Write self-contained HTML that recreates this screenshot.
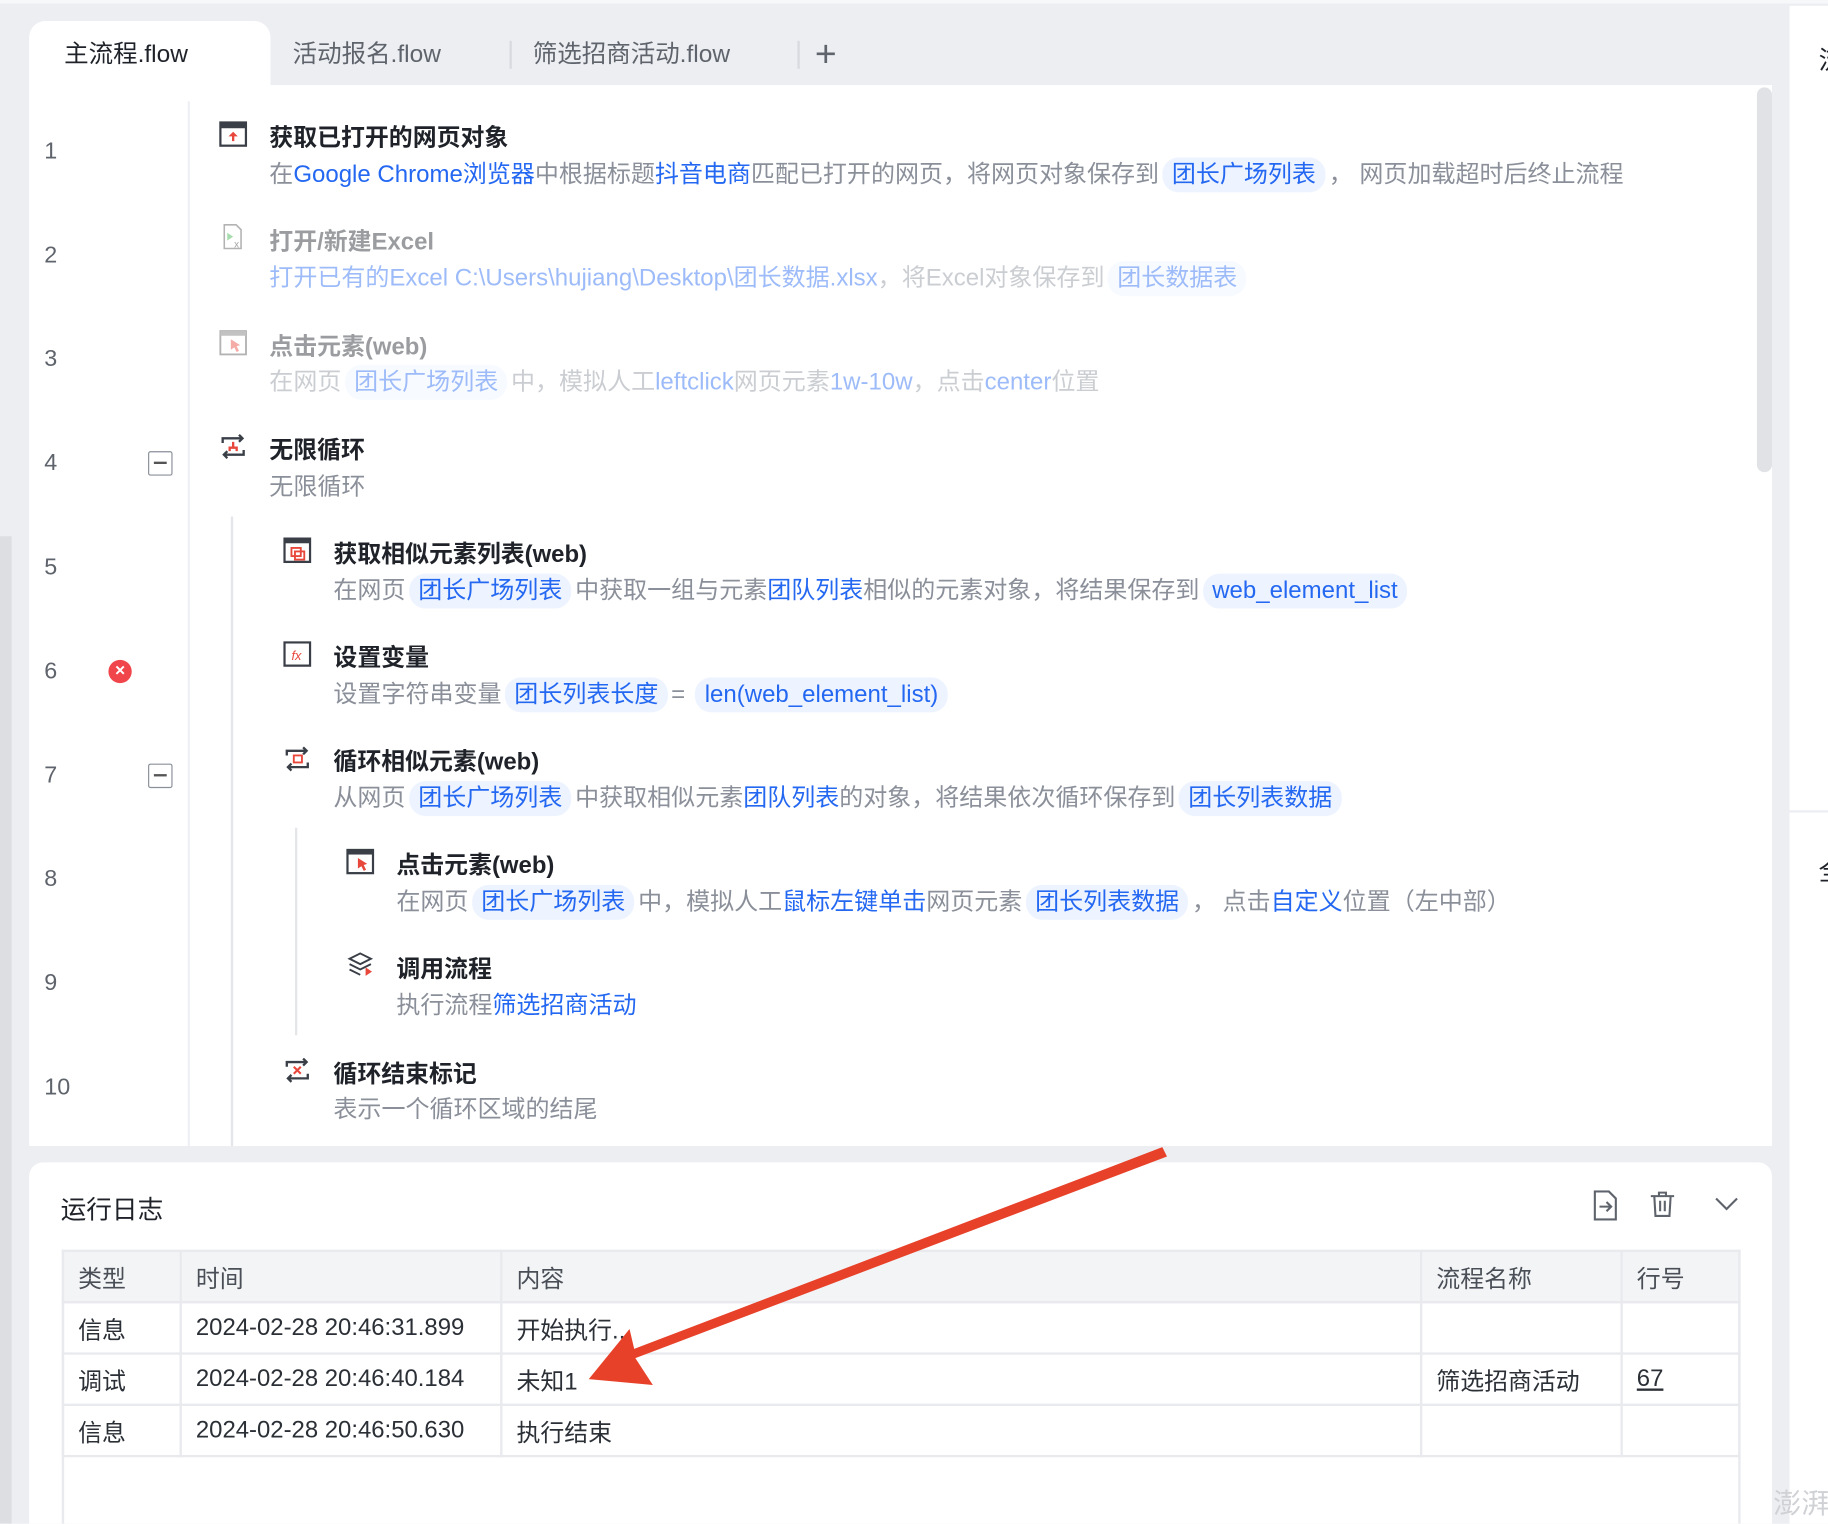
<!DOCTYPE html>
<html><head><meta charset="utf-8">
<style>
*{box-sizing:border-box;margin:0;padding:0}
html,body{width:1828px;height:1524px;overflow:hidden;background:#eceef2}
#w{position:absolute;left:0;top:0;width:1568px;height:1307px;overflow:hidden;transform:scale(1.16582);transform-origin:0 0;background:#eceef2;font-family:"Liberation Sans","Noto Sans CJK SC",sans-serif;color:#1f2329}
.a{position:absolute}
.tab{position:absolute;top:30px;font-size:21px;color:#5f646c;white-space:nowrap}
.ln{position:absolute;left:38px;font-size:20px;color:#5f646c}
.t{position:absolute;font-size:20.5px;font-weight:bold;white-space:nowrap;color:#1f2329}
.d{position:absolute;font-size:20.6px;color:#8a8f99;white-space:nowrap}
.b{color:#2468f2}
.g{display:inline-block;background:#eef4ff;color:#2468f2;border-radius:14px;padding:0 8px;margin:0 3px;line-height:30px}
.fade{opacity:.45}
.ic{position:absolute;width:24px;height:22px}
.box{position:absolute;width:21px;height:21px;border:1.5px solid #8a8f99;border-radius:2px}
.box:after{content:"";position:absolute;left:4px;right:4px;top:8px;height:1.5px;background:#555}
table{border-collapse:collapse;font-size:20.5px;color:#2b2f36}
td,th{border:2px solid #e9eaee;text-align:left;font-weight:normal;padding:0 12px;height:44px;white-space:nowrap}
th{background:#f3f4f6;color:#4a4f57}
</style></head><body><div id="w">
<div class="a" style="left:0;top:0;width:1568px;height:3px;background:#f7f8fa"></div>
<div class="a" style="left:0;top:460px;width:10px;height:847px;background:#dcdee2"></div>
<!-- right panel -->
<div class="a" style="left:1535px;top:5px;width:33px;height:1302px;background:#fff"></div>
<div class="a" style="left:1535px;top:695px;width:33px;height:2px;background:#eceef2"></div>
<div class="a" style="left:1560px;top:34px;font-size:22px">流</div>
<div class="a" style="left:1560px;top:730px;font-size:22px">全</div>
<div class="a" style="left:1521px;top:1277px;font-size:24px;line-height:28px;color:#cfd1d5;white-space:nowrap">澎湃</div>
<!-- tabs -->
<div class="a" style="left:25px;top:18px;width:207px;height:60px;background:#fff;border-radius:14px 14px 0 0"></div>
<div class="tab" style="left:55px;color:#1f2329">主流程.flow</div>
<div class="tab" style="left:251px">活动报名.flow</div>
<div class="a" style="left:437px;top:35px;width:2px;height:24px;background:#d8dadf"></div>
<div class="tab" style="left:457px">筛选招商活动.flow</div>
<div class="a" style="left:684px;top:35px;width:2px;height:24px;background:#d8dadf"></div>
<div class="a" style="left:699px;top:28px;font-size:32px;color:#5f646c;font-weight:300">+</div>
<!-- main content -->
<div class="a" style="left:25px;top:73px;width:1495px;height:910px;background:#fff;overflow:hidden">
<div class="a" style="left:1482px;top:2px;width:13px;height:330px;background:#e1e2e6;border-radius:7px"></div>
<div class="a" style="left:136px;top:14px;width:2px;height:896px;background:#eef0f3"></div>
<div class="a" style="left:173px;top:370px;width:2px;height:540px;background:#e4e6ea"></div>
<div class="a" style="left:228px;top:637px;width:2px;height:178px;background:#e4e6ea"></div>
</div>
<div class="ln" style="top:119px">1</div>
<div class="ln" style="top:208px">2</div>
<div class="ln" style="top:297px">3</div>
<div class="ln" style="top:386px">4</div>
<div class="ln" style="top:476px">5</div>
<div class="ln" style="top:565px">6</div>
<div class="ln" style="top:654px">7</div>
<div class="ln" style="top:743px">8</div>
<div class="ln" style="top:832px">9</div>
<div class="ln" style="top:922px">10</div>
<div class="box" style="left:127px;top:387px"></div>
<div class="box" style="left:127px;top:655px"></div>
<div class="a" style="left:93px;top:566px;width:20px;height:20px;border-radius:50%;background:#f0454a;color:#fff;font-size:15px;line-height:20px;text-align:center;font-weight:bold">×</div>

<!-- step 1 -->
<svg class="ic" style="left:188px;top:104px" viewBox="0 0 24 22"><rect x="1" y="1" width="22" height="20" fill="none" stroke="#3a3f47" stroke-width="2"/><rect x="1" y="1" width="22" height="5" fill="#3a3f47"/><path d="M12 9l-4 4h3v4h2v-4h3z" fill="#e8473c"/></svg>
<div class="t" style="left:231px;top:101px">获取已打开的网页对象</div>
<div class="d" style="left:231px;top:132px">在<span class="b">Google Chrome浏览器</span>中根据标题<span class="b">抖音电商</span>匹配已打开的网页，将网页对象保存到<span class="g">团长广场列表</span>， 网页加载超时后终止流程</div>
<!-- step 2 -->
<div class="fade">
<svg class="ic" style="left:188px;top:192px" viewBox="0 0 24 26"><path d="M3 1h12l5 5v19H3z" fill="none" stroke="#555" stroke-width="1.6"/><path d="M6 9l6 4-6 4z" fill="#3bb34a"/><text x="13" y="24" font-size="10" fill="#333">x</text></svg>
<div class="t" style="left:231px;top:190px">打开/新建Excel</div>
<div class="d" style="left:231px;top:221px"><span class="b">打开已有的Excel C:\Users\hujiang\Desktop\团长数据.xlsx</span>，将Excel对象保存到<span class="g">团长数据表</span></div>
<svg class="ic" style="left:188px;top:283px" viewBox="0 0 24 22"><rect x="1" y="1" width="22" height="20" fill="none" stroke="#555" stroke-width="1.6"/><rect x="1" y="1" width="22" height="4" fill="#777"/><path d="M10 8l8 5-3 1 2 4-2 1-2-4-3 2z" fill="#e8473c"/></svg>
<div class="t" style="left:231px;top:280px">点击元素(web)</div>
<div class="d" style="left:231px;top:310px">在网页<span class="g">团长广场列表</span>中，模拟人工<span class="b">leftclick</span>网页元素<span class="b">1w-10w</span>，点击<span class="b">center</span>位置</div>
</div>
<!-- step 4 -->
<svg class="ic" style="left:188px;top:372px" viewBox="0 0 24 22"><path d="M3 8V4h17M17 1l3 3-3 3M21 14v4H4M7 21l-3-3 3-3" fill="none" stroke="#3a3f47" stroke-width="2"/><path d="M12 7v4M9 15v-3h6v3" stroke="#e8473c" stroke-width="2" fill="none"/></svg>
<div class="t" style="left:231px;top:369px">无限循环</div>
<div class="d" style="left:231px;top:400px">无限循环</div>
<!-- step 5 -->
<svg class="ic" style="left:243px;top:461px" viewBox="0 0 24 22"><rect x="1" y="1" width="22" height="20" fill="none" stroke="#3a3f47" stroke-width="2"/><rect x="1" y="1" width="22" height="4" fill="#3a3f47"/><rect x="7" y="9" width="8" height="7" fill="none" stroke="#e8473c" stroke-width="1.6"/><rect x="10" y="12" width="8" height="7" fill="none" stroke="#e8473c" stroke-width="1.6"/></svg>
<div class="t" style="left:286px;top:458px">获取相似元素列表(web)</div>
<div class="d" style="left:286px;top:489px">在网页<span class="g">团长广场列表</span>中获取一组与元素<span class="b">团队列表</span>相似的元素对象，将结果保存到<span class="g">web_element_list</span></div>
<!-- step 6 -->
<svg class="ic" style="left:243px;top:550px" viewBox="0 0 24 22"><rect x="1" y="1" width="22" height="20" fill="none" stroke="#3a3f47" stroke-width="2"/><text x="7" y="16" font-size="11" font-style="italic" fill="#e8473c">fx</text></svg>
<div class="t" style="left:286px;top:547px">设置变量</div>
<div class="d" style="left:286px;top:578px">设置字符串变量<span class="g">团长列表长度</span>= <span class="g">len(web_element_list)</span></div>
<!-- step 7 -->
<svg class="ic" style="left:243px;top:640px" viewBox="0 0 24 22"><path d="M3 8V4h17M17 1l3 3-3 3M21 14v4H4M7 21l-3-3 3-3" fill="none" stroke="#3a3f47" stroke-width="2"/><rect x="9" y="8" width="7" height="6" fill="none" stroke="#e8473c" stroke-width="1.6"/></svg>
<div class="t" style="left:286px;top:636px">循环相似元素(web)</div>
<div class="d" style="left:286px;top:667px">从网页<span class="g">团长广场列表</span>中获取相似元素<span class="b">团队列表</span>的对象，将结果依次循环保存到<span class="g">团长列表数据</span></div>
<!-- step 8 -->
<svg class="ic" style="left:297px;top:728px" viewBox="0 0 24 22"><rect x="1" y="1" width="22" height="20" fill="none" stroke="#3a3f47" stroke-width="2"/><rect x="1" y="1" width="22" height="4" fill="#3a3f47"/><path d="M10 8l8 5-3 1 2 4-2 1-2-4-3 2z" fill="#e8473c"/></svg>
<div class="t" style="left:340px;top:725px">点击元素(web)</div>
<div class="d" style="left:340px;top:756px">在网页<span class="g">团长广场列表</span>中，模拟人工<span class="b">鼠标左键单击</span>网页元素<span class="g">团长列表数据</span>， 点击<span class="b">自定义</span>位置（左中部）</div>
<!-- step 9 -->
<svg class="ic" style="left:297px;top:816px" viewBox="0 0 24 24"><path d="M12 2l10 5-10 5L2 7z" fill="none" stroke="#3a3f47" stroke-width="1.8"/><path d="M2 12l10 5 10-5M2 17l10 5" fill="none" stroke="#3a3f47" stroke-width="1.8"/><path d="M17 15l6 4-6 4z" fill="#e8473c"/></svg>
<div class="t" style="left:340px;top:814px">调用流程</div>
<div class="d" style="left:340px;top:845px">执行流程<span class="b">筛选招商活动</span></div>
<!-- step 10 -->
<svg class="ic" style="left:243px;top:907px" viewBox="0 0 24 22"><path d="M3 8V4h17M17 1l3 3-3 3M21 14v4H4M7 21l-3-3 3-3" fill="none" stroke="#3a3f47" stroke-width="2"/><path d="M9 8l6 6M15 8l-6 6" stroke="#e8473c" stroke-width="1.8"/></svg>
<div class="t" style="left:286px;top:904px">循环结束标记</div>
<div class="d" style="left:286px;top:934px">表示一个循环区域的结尾</div>

<!-- log panel -->
<div class="a" style="left:25px;top:997px;width:1495px;height:310px;background:#fff;border-radius:12px 12px 0 0"></div>
<div class="a" style="left:52px;top:1020px;font-size:22px;color:#1f2329">运行日志</div>
<svg class="a" style="left:1365px;top:1021px" width="24" height="26" viewBox="0 0 24 26"><path d="M3 1h12l6 6v18H3z" fill="none" stroke="#5f646c" stroke-width="1.8"/><path d="M7 14h9M13 10l4 4-4 4" fill="none" stroke="#5f646c" stroke-width="1.8"/></svg>
<svg class="a" style="left:1414px;top:1021px" width="24" height="24" viewBox="0 0 24 24"><path d="M2 5h20M9 5V2h6v3M5 5l1 17h12l1-17M10 9v9M14 9v9" fill="none" stroke="#5f646c" stroke-width="1.8"/></svg>
<svg class="a" style="left:1470px;top:1024px" width="22" height="16" viewBox="0 0 22 16"><path d="M2 4l9 9 9-9" fill="none" stroke="#5f646c" stroke-width="1.8"/></svg>
<div class="a" style="left:53px;top:1072px;width:1440px;height:235px;border:2px solid #e9eaee;border-bottom:none"></div>
<table class="a" style="left:53px;top:1072px;width:1440px">
<tr><th style="width:101px">类型</th><th style="width:275px">时间</th><th style="width:789px">内容</th><th style="width:172px">流程名称</th><th>行号</th></tr>
<tr><td>信息</td><td>2024-02-28 20:46:31.899</td><td>开始执行..</td><td></td><td></td></tr>
<tr><td>调试</td><td>2024-02-28 20:46:40.184</td><td>未知1</td><td>筛选招商活动</td><td><u>67</u></td></tr>
<tr><td>信息</td><td>2024-02-28 20:46:50.630</td><td>执行结束</td><td></td><td></td></tr>
</table>
<!-- red arrow -->
<svg class="a" style="left:0;top:0" width="1568" height="1307"><path d="M997 984L1001 992L545 1165L560 1188L505 1183L540 1140L544 1157Z" fill="#e8412a"/></svg>
</div></body></html>
